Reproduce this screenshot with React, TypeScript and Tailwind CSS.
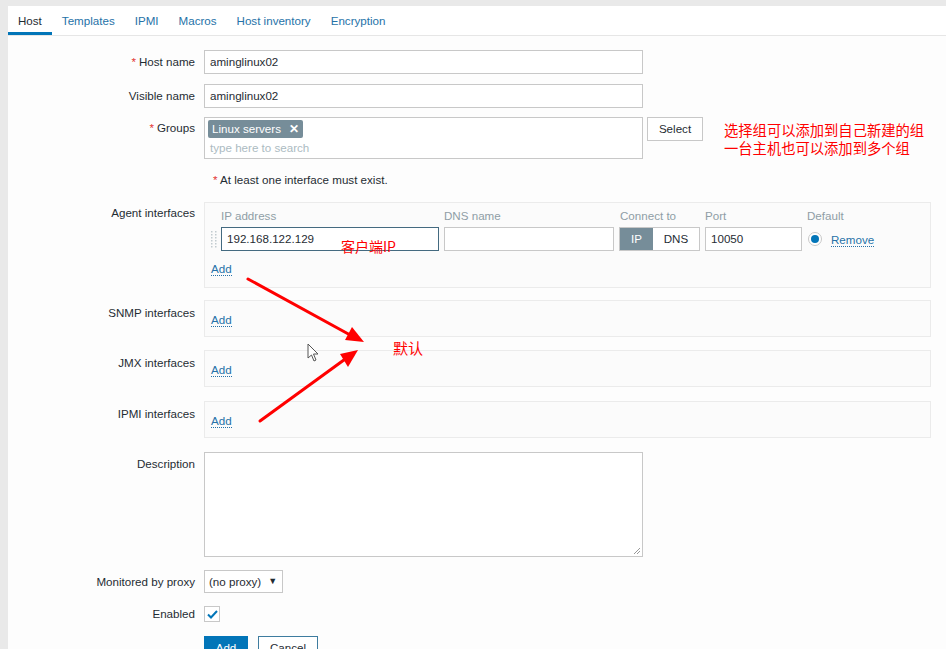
import React from "react";

const tabs = ["Host", "Templates", "IPMI", "Macros", "Host inventory", "Encryption"];

function Label({ text, required, className = "" }: { text: string; required?: boolean; className?: string }) {
  return (
    <div className={`w-[187px] shrink-0 text-right leading-[14px] ${className}`}>
      {required && <span className="text-[#e33734] mr-[3px]">*</span>}
      {text}
    </div>
  );
}

function AddLink() {
  return (
    <span className="text-[#2672a8] border-b border-dotted border-[#2672a8] leading-[13px]">Add</span>
  );
}

function IfaceBox({ label, top }: { label: string; top: string }) {
  return (
    <div className={`flex gap-[9px] ${top}`}>
      <Label text={label} className="pt-[6px]" />
      <div className="w-[727px] h-[37px] border border-[#ebebeb] bg-[#fbfbfb] flex items-center pl-[6px] pt-[2px]">
        <AddLink />
      </div>
    </div>
  );
}

const cjk = { fontFamily: '"Noto Sans CJK SC", sans-serif' };

export default function App() {
  return (
    <div
      className="relative min-h-screen bg-[#e9e9e9] pt-[6px] pl-[8px] text-[11.6px] text-[#1f2c33] overflow-hidden"
      style={{ fontFamily: '"Liberation Sans", Arial, sans-serif' }}
    >
      <div className="bg-[#fdfdfd] min-h-[700px]">
        {/* tabs */}
        <div className="flex h-[30px] border-b border-[#e6e6e6] bg-white">
          {tabs.map((t, i) => (
            <div
              key={t}
              className={`px-[10px] flex items-center h-full ${
                i === 0 ? "text-[#1f2c33] border-b-[3px] border-[#0275b8] pt-[3px]" : "text-[#2672a8]"
              }`}
            >
              {t}
            </div>
          ))}
        </div>

        <div className="flex flex-col">
          {/* Host name */}
          <div className="flex items-center gap-[9px] mt-[14px]">
            <Label text="Host name" required />
            <div className="w-[439px] h-[24px] border border-[#c8c8c8] bg-white px-[5px] flex items-center">aminglinux02</div>
          </div>
          {/* Visible name */}
          <div className="flex items-center gap-[9px] mt-[10px]">
            <Label text="Visible name" />
            <div className="w-[439px] h-[24px] border border-[#c8c8c8] bg-white px-[5px] flex items-center">aminglinux02</div>
          </div>
          {/* Groups */}
          <div className="flex gap-[9px] mt-[9px]">
            <Label text="Groups" required className="pt-[4px]" />
            <div className="w-[439px] h-[42px] border border-[#c8c8c8] bg-white px-[3px] pt-[2px]">
              <span className="inline-flex items-center h-[18px] bg-[#768d99] text-white px-[4px] rounded-[2px]">
                Linux servers
                <span className="ml-[8px] font-bold text-[12px]">✕</span>
              </span>
              <div className="text-[#acbbc2] pl-[2px] mt-[1px]">type here to search</div>
            </div>
            <div className="ml-[-5px] w-[56px] h-[24px] border border-[#c8c8c8] bg-white flex items-center justify-center text-[#1f2c33]">
              Select
            </div>
          </div>
          {/* note */}
          <div className="ml-[205px] mt-[14px] leading-[14px]">
            <span className="text-[#e33734]">*</span> At least one interface must exist.
          </div>

          {/* Agent interfaces */}
          <div className="flex gap-[9px] mt-[15px]">
            <Label text="Agent interfaces" className="pt-[4px]" />
            <div className="w-[727px] h-[86px] border border-[#ebebeb] bg-[#fbfbfb] pl-[5px] pt-[5px]">
              <div className="flex text-[#8f9ea6] h-[16px] items-center">
                <div className="w-[11px]" />
                <div className="w-[218px]">IP address</div>
                <div className="w-[170px] ml-[5px]">DNS name</div>
                <div className="w-[81px] ml-[5px] pl-[1px]">Connect to</div>
                <div className="w-[97px] ml-[5px]">Port</div>
                <div className="ml-[5px]">Default</div>
              </div>
              <div className="flex items-center mt-[3px] h-[24px]">
                <div className="w-[11px] flex">
                  <svg width="7" height="18" viewBox="0 0 7 18">
                    {[0, 1, 2, 3, 4, 5].map((r) =>
                      [0, 1].map((c) => (
                        <rect key={`${r}-${c}`} x={c * 4 + 1} y={r * 3 + 1} width="1.5" height="1.5" fill="#c2cbd0" />
                      ))
                    )}
                  </svg>
                </div>
                <div className="w-[218px] h-[24px] border border-[#446a80] bg-white px-[5px] flex items-center">192.168.122.129</div>
                <div className="w-[170px] ml-[5px] h-[24px] border border-[#c8c8c8] bg-white" />
                <div className="w-[81px] ml-[5px] h-[24px] border border-[#c8c8c8] flex">
                  <div className="w-[33px] bg-[#768d99] text-white flex items-center justify-center">IP</div>
                  <div className="flex-1 bg-white flex items-center justify-center">DNS</div>
                </div>
                <div className="w-[97px] ml-[5px] h-[24px] border border-[#c8c8c8] bg-white px-[5px] flex items-center">10050</div>
                <div className="ml-[6px] w-[14px] h-[14px] rounded-full border border-[#c8c8c8] bg-white flex items-center justify-center">
                  <div className="w-[8px] h-[8px] rounded-full bg-[#0275b8]" />
                </div>
                <span className="ml-[9px] mt-[1px] text-[#2672a8] border-b border-dotted border-[#2672a8] leading-[13px]">Remove</span>
              </div>
              <div className="mt-[9px] pl-[1px]">
                <AddLink />
              </div>
            </div>
          </div>

          <IfaceBox label="SNMP interfaces" top="mt-[12px]" />
          <IfaceBox label="JMX interfaces" top="mt-[13px]" />
          <IfaceBox label="IPMI interfaces" top="mt-[14px]" />

          {/* Description */}
          <div className="flex gap-[9px] mt-[14px]">
            <Label text="Description" className="pt-[5px]" />
            <div className="relative w-[439px] h-[105px] border border-[#c8c8c8] bg-white">
              <svg className="absolute right-[1px] bottom-[1px]" width="8" height="8" viewBox="0 0 8 8">
                <line x1="7" y1="1" x2="1" y2="7" stroke="#999" strokeWidth="1" />
                <line x1="7" y1="4" x2="4" y2="7" stroke="#999" strokeWidth="1" />
              </svg>
            </div>
          </div>

          {/* proxy */}
          <div className="flex items-center gap-[9px] mt-[13px]">
            <Label text="Monitored by proxy" />
            <div className="w-[79px] h-[23px] border border-[#c8c8c8] bg-white flex items-center pl-[4px]">
              (no proxy)
              <span className="ml-[7px] text-[9px]">▼</span>
            </div>
          </div>

          {/* enabled */}
          <div className="flex items-center gap-[9px] mt-[13px]">
            <Label text="Enabled" />
            <div className="w-[16px] h-[16px] border border-[#c8c8c8] bg-white flex items-center justify-center">
              <svg width="11" height="9" viewBox="0 0 11 9">
                <path d="M1 4.5 L4 7.5 L10 1" fill="none" stroke="#0275b8" strokeWidth="2" />
              </svg>
            </div>
          </div>

          {/* buttons */}
          <div className="flex gap-[10px] ml-[196px] mt-[14px]">
            <div className="w-[44px] h-[24px] bg-[#0275b8] text-white flex items-center justify-center border border-[#0275b8]">Add</div>
            <div className="w-[60px] h-[24px] bg-white text-[#1f2c33] flex items-center justify-center border border-[#3e7c9f]">Cancel</div>
          </div>
        </div>
      </div>

      {/* annotations */}
      <div className="absolute left-[724px] top-[121px] text-[#ff0000] text-[14.3px] leading-[18px] whitespace-nowrap" style={cjk}>
        <div>选择组可以添加到自己新建的组</div>
        <div>一台主机也可以添加到多个组</div>
      </div>
      <div className="absolute left-[341px] top-[237px] text-[#ff0000] text-[14px] leading-[18px]" style={cjk}>
        客户端IP
      </div>
      <div className="absolute left-[393px] top-[339px] text-[#ff0000] text-[15px] leading-[18px]" style={cjk}>
        默认
      </div>

      <svg className="absolute left-0 top-0 pointer-events-none" width="946" height="649">
        <line x1="248" y1="279" x2="352" y2="336" stroke="#ff0000" strokeWidth="3" strokeLinecap="round" />
        <polygon points="364,342 352,327 345,340" fill="#ff0000" />
        <line x1="260" y1="421" x2="348" y2="357" stroke="#ff0000" strokeWidth="3" strokeLinecap="round" />
        <polygon points="358,350 340,354 348,367" fill="#ff0000" />
        <path d="M308 344 L308 358 L311.5 355 L314 361 L316 360 L313.5 354 L318 354 Z" fill="#ffffff" stroke="#555" strokeWidth="1" />
      </svg>
    </div>
  );
}
